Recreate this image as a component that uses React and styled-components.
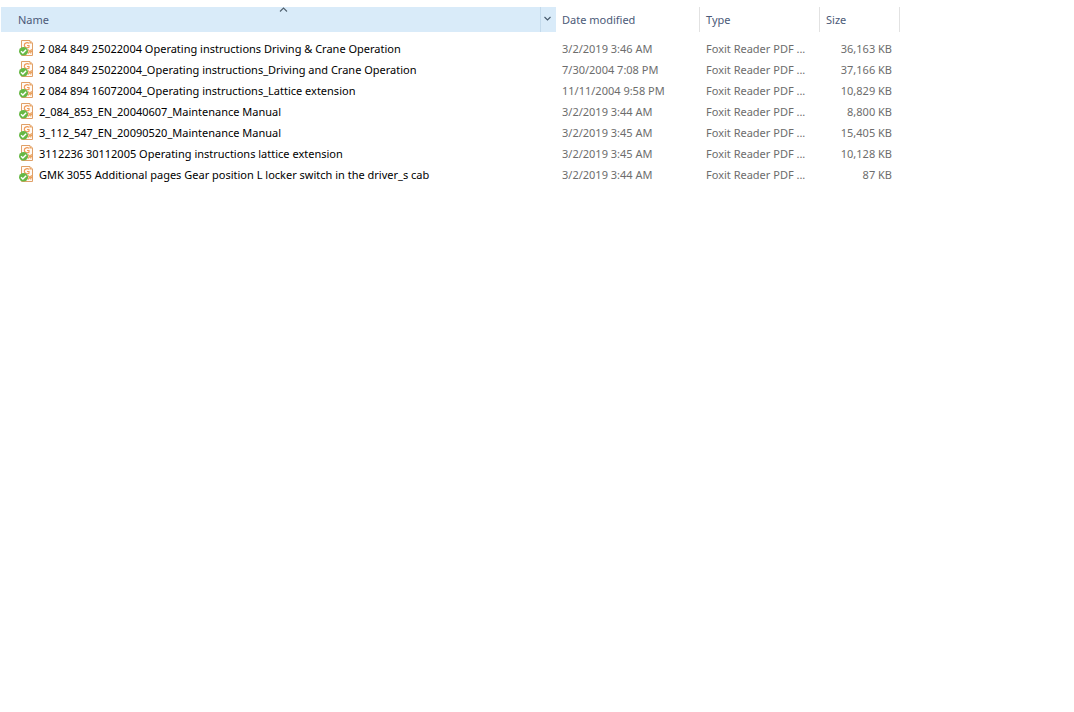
import React from "react";
import styled, { createGlobalStyle } from "styled-components";

const GlobalStyle = createGlobalStyle`
  body {
    margin: 0;
    background: #fff;
    font-family: "Segoe UI", "Noto Sans", sans-serif;
    font-size: 11px;
    line-height: 20px;
    color: #000;
  }
`;

const Pane = styled.main`
  padding: 7px 174px 0 1px;
`;

const FileTable = styled.table`
  width: 100%;
  table-layout: fixed;
  border-collapse: separate;
  border-spacing: 0;
`;

const Column = styled.col`
  width: ${(p) => p.$width || "auto"};
`;

const HeaderCell = styled.th`
  height: 25px;
  padding: 0;
  font-weight: 400;
  text-align: left;
  background: ${(p) => (p.$active ? "#d9ebf9" : "#fff")};
  border-right: ${(p) => (p.$active ? "0" : "1px solid #e2e2e2")};
`;

const HeaderInner = styled.div`
  position: relative;
  display: flex;
  height: 25px;
`;

const SortButton = styled.button`
  flex: 1;
  min-width: 0;
  padding: 0 0 0 ${(p) => (p.$wide ? "17px" : "6px")};
  border: 0;
  background: none;
  font: inherit;
  color: #4c5a78;
  text-align: left;
`;

const FilterButton = styled.button`
  display: flex;
  align-items: center;
  justify-content: center;
  width: 16px;
  padding: 0 2px 1px 0;
  border: 0;
  border-left: 1px solid #c3daec;
  background: none;
`;

const SortMark = styled.svg`
  position: absolute;
  top: 0;
  left: 50%;
  width: 9px;
  height: 5px;
`;

const Body = styled.tbody`
  &::before {
    content: "";
    display: table-row;
    height: 7px;
  }
`;

const Cell = styled.td`
  height: 21px;
  padding: 0 ${(p) => (p.$right ? "8px" : "0")} 0 6px;
  color: #6d6d6d;
  text-align: ${(p) => (p.$right ? "right" : "left")};
  vertical-align: top;
  white-space: nowrap;
  overflow: hidden;
`;

const NameCell = styled(Cell)`
  padding-left: 18px;
  color: #000;
`;

const FileLabel = styled.div`
  display: flex;
  align-items: center;
  gap: 4px;
`;

const Icon = styled.svg`
  flex: none;
  width: 16px;
  height: 16px;
  margin-bottom: 2px;
`;

const files = [
  ["2 084 849 25022004 Operating instructions Driving & Crane Operation", "3/2/2019 3:46 AM", "36,163 KB"],
  ["2 084 849 25022004_Operating instructions_Driving and Crane Operation", "7/30/2004 7:08 PM", "37,166 KB"],
  ["2 084 894 16072004_Operating instructions_Lattice extension", "11/11/2004 9:58 PM", "10,829 KB"],
  ["2_084_853_EN_20040607_Maintenance Manual", "3/2/2019 3:44 AM", "8,800 KB"],
  ["3_112_547_EN_20090520_Maintenance Manual", "3/2/2019 3:45 AM", "15,405 KB"],
  ["3112236 30112005 Operating instructions lattice extension", "3/2/2019 3:45 AM", "10,128 KB"],
  ["GMK 3055 Additional pages Gear position L locker switch in the driver_s cab", "3/2/2019 3:44 AM", "87 KB"],
];

function PdfIcon() {
  return (
    <Icon viewBox="0 0 16 16" fill="none" aria-hidden="true">
      <path d="M2.5 .5H11L13.5 3V15.5H2.5Z" fill="#fffaf4" stroke="#e0a068" />
      <path d="M10.5 .5V3.5H13.5Z" fill="#e9a566" />
      <path d="M10 3.4C8.6 2.2 5.3 2.6 5.3 5.3C5.3 7.9 8.2 8.2 10 7.2V5.5H8" stroke="#f09a58" strokeWidth="1.2" />
      <path d="M8.9 13.3V9.9H9.5C10.9 9.9 10.9 13 9.5 13H8.9M11.8 13.5V9.9H13M11.8 11.6H12.8" stroke="#e58a35" strokeWidth="1" />
      <ellipse cx="4.5" cy="11.3" rx="4.5" ry="4.2" fill="#66b845" />
      <path d="M2 11.3L3.9 13.1L7.1 9.8" stroke="#fff" strokeWidth="1.4" />
    </Icon>
  );
}

export default function App() {
  return (
    <>
      <GlobalStyle />
      <Pane>
        <FileTable>
          <colgroup>
            <Column />
            <Column $width="144px" />
            <Column $width="120px" />
            <Column $width="80px" />
          </colgroup>
          <thead>
            <tr>
              <HeaderCell $active aria-sort="ascending">
                <HeaderInner>
                  <SortButton $wide>Name</SortButton>
                  <SortMark viewBox="0 0 9 5" aria-hidden="true">
                    <path d="M1 4.5L4.5 1L8 4.5" fill="none" stroke="#50606e" strokeWidth="1.1" />
                  </SortMark>
                  <FilterButton aria-label="Filter by name">
                    <svg width="9" height="6" viewBox="0 0 9 6" aria-hidden="true">
                      <path d="M1.5 1L4.5 4L7.5 1" fill="none" stroke="#45586b" strokeWidth="1.1" />
                    </svg>
                  </FilterButton>
                </HeaderInner>
              </HeaderCell>
              {["Date modified", "Type", "Size"].map((title) => (
                <HeaderCell key={title}>
                  <HeaderInner>
                    <SortButton>{title}</SortButton>
                  </HeaderInner>
                </HeaderCell>
              ))}
            </tr>
          </thead>
          <Body>
            {files.map(([name, date, size]) => (
              <tr key={name}>
                <NameCell>
                  <FileLabel>
                    <PdfIcon />
                    {name}
                  </FileLabel>
                </NameCell>
                <Cell>{date}</Cell>
                <Cell>Foxit Reader PDF ...</Cell>
                <Cell $right>{size}</Cell>
              </tr>
            ))}
          </Body>
        </FileTable>
      </Pane>
    </>
  );
}
